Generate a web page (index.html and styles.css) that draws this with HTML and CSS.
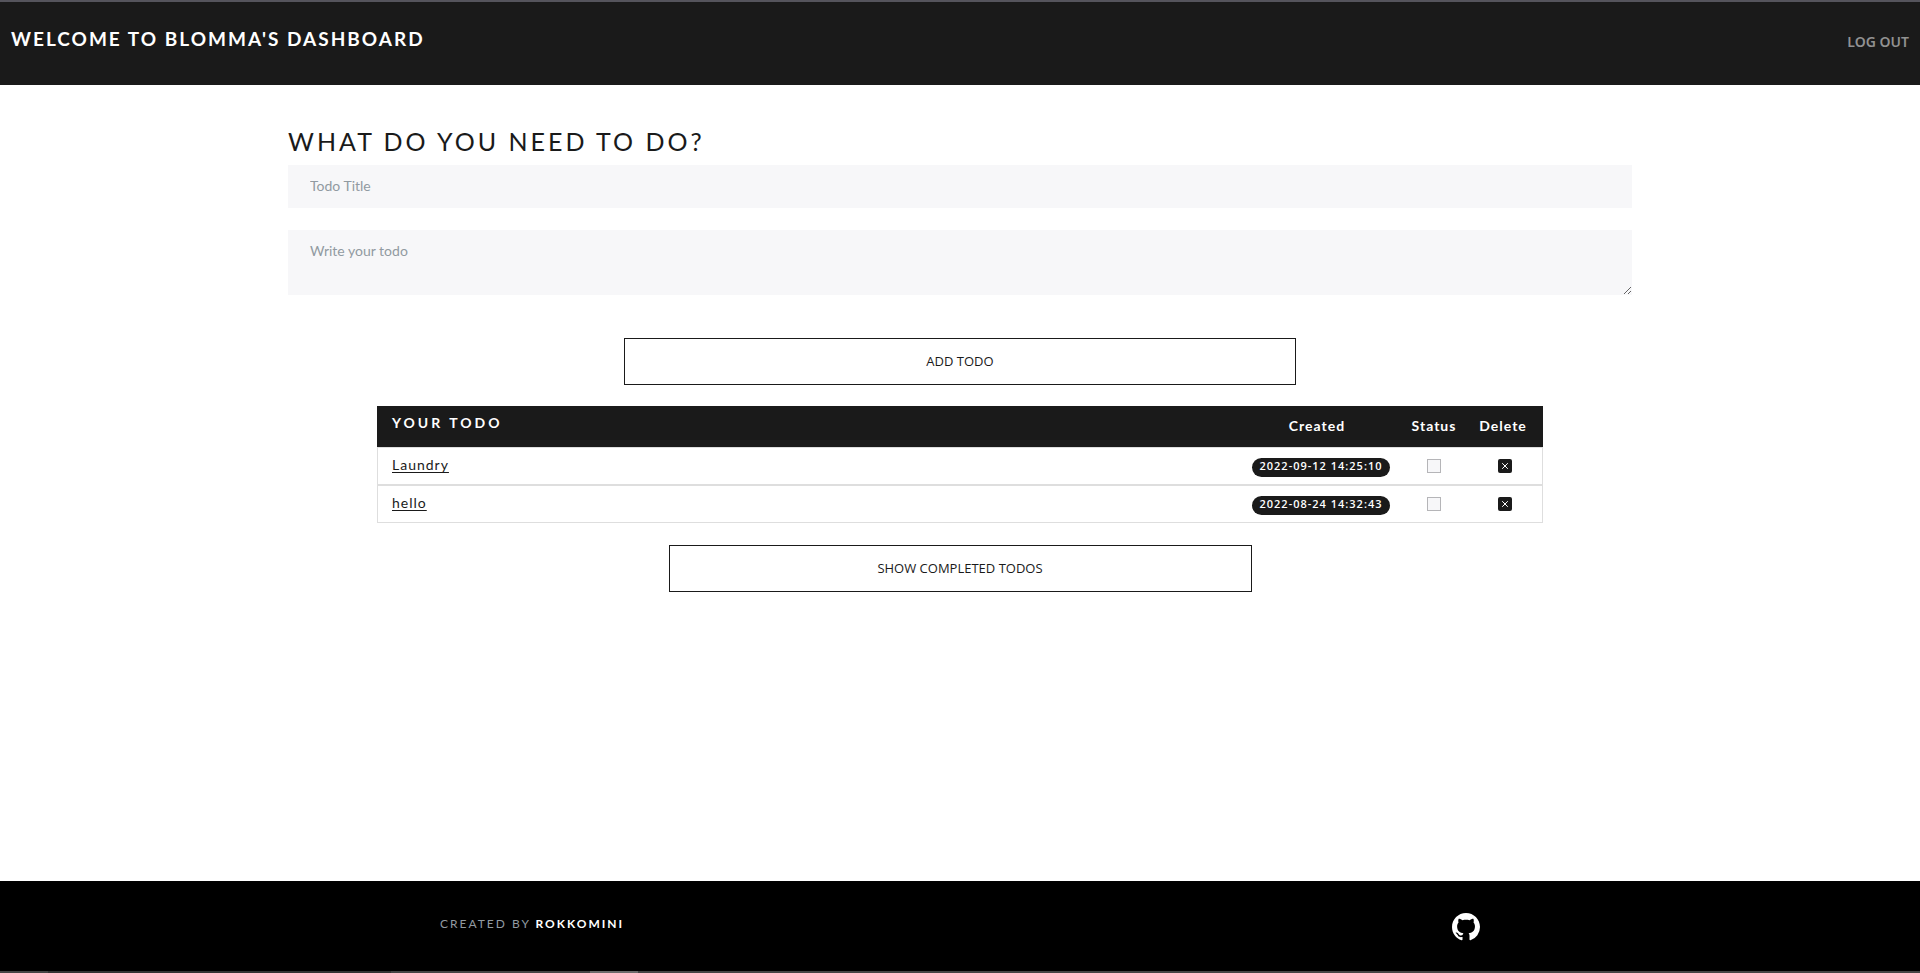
FILE: index.html
```html
<!DOCTYPE html>
<html lang="en">
<head>
<meta charset="utf-8">
<meta name="viewport" content="width=device-width, initial-scale=1">
<title>Dashboard</title>
<link rel="stylesheet" href="styles.css">
</head>
<body>
<header class="topbar">
  <h1 class="topbar-title">Welcome to Blomma's dashboard</h1>
  <a class="logout" href="#">Log out</a>
</header>
<main class="content">
  <form class="todo-form">
    <h2 class="form-title">What do you need to do?</h2>
    <input class="field" type="text" placeholder="Todo Title" aria-label="Todo Title">
    <textarea class="field field-area" placeholder="Write your todo" aria-label="Write your todo"></textarea>
    <button class="outline-button" type="button">Add todo</button>
  </form>
  <section class="todos">
    <table class="todo-table">
      <thead>
        <tr>
          <th class="name-head" scope="col">Your todo</th>
          <th class="created-col" scope="col">Created</th>
          <th class="status-col" scope="col">Status</th>
          <th class="delete-col" scope="col">Delete</th>
        </tr>
      </thead>
      <tbody>
        <tr>
          <td class="name-cell"><a class="todo-link" href="#">Laundry</a></td>
          <td class="created-col"><span class="badge">2022-09-12 14:25:10</span></td>
          <td class="status-col"><input class="check" type="checkbox" aria-label="Laundry completed"></td>
          <td class="delete-col"><button class="delete" type="button" aria-label="Delete Laundry"><svg viewBox="0 0 14 14"><path d="M4.2 4.2l5.6 5.6M9.8 4.2l-5.6 5.6"/></svg></button></td>
        </tr>
        <tr>
          <td class="name-cell"><a class="todo-link" href="#">hello</a></td>
          <td class="created-col"><span class="badge">2022-08-24 14:32:43</span></td>
          <td class="status-col"><input class="check" type="checkbox" aria-label="hello completed"></td>
          <td class="delete-col"><button class="delete" type="button" aria-label="Delete hello"><svg viewBox="0 0 14 14"><path d="M4.2 4.2l5.6 5.6M9.8 4.2l-5.6 5.6"/></svg></button></td>
        </tr>
      </tbody>
    </table>
    <button class="outline-button" type="button">Show completed todos</button>
  </section>
</main>
<footer class="footer">
  <p class="credit">Created by <a class="author" href="#">Rokkomini</a></p>
  <a class="github" href="#" aria-label="GitHub"><svg viewBox="0 0 16 16"><path d="M8 0C3.58 0 0 3.58 0 8c0 3.54 2.29 6.53 5.47 7.59.4.07.55-.17.55-.38 0-.19-.01-.82-.01-1.49-2.01.37-2.53-.49-2.69-.94-.09-.23-.48-.94-.82-1.13-.28-.15-.68-.52-.01-.53.63-.01 1.08.58 1.23.82.72 1.21 1.87.87 2.33.66.07-.52.28-.87.51-1.07-1.78-.2-3.64-.89-3.64-3.95 0-.87.31-1.59.82-2.15-.08-.2-.36-1.02.08-2.12 0 0 .67-.21 2.2.82.64-.18 1.32-.27 2-.27s1.36.09 2 .27c1.53-1.04 2.2-.82 2.2-.82.44 1.1.16 1.92.08 2.12.51.56.82 1.27.82 2.15 0 3.07-1.87 3.75-3.65 3.95.29.25.54.73.54 1.48 0 1.07-.01 1.93-.01 2.2 0 .21.15.46.55.38A8.01 8.01 0 0 0 16 8c0-4.42-3.58-8-8-8z"/></svg></a>
</footer>
<div class="bottom-strip"></div>
</body>
</html>
```
FILE: styles.css
```css
* { box-sizing: border-box; }

body {
  margin: 0;
  min-height: 100vh;
  display: flex;
  flex-direction: column;
  background: #fff;
  color: #1a1a1a;
  font-family: Lato, "Open Sans", sans-serif;
  font-size: 14px;
  line-height: 21px;
}

h1, h2, p { margin: 0; }

.topbar {
  display: flex;
  justify-content: space-between;
  align-items: flex-start;
  padding: 26px 11px 33px;
  border-top: 2px solid #55545c;
  background: #1a1a1a;
}

.topbar-title {
  color: #fff;
  font-size: 19px;
  font-weight: 700;
  line-height: 22px;
  letter-spacing: 2px;
  text-transform: uppercase;
}

.logout {
  margin-top: 4px;
  color: #919191;
  font: 600 14px/20px "Noto Sans", sans-serif;
  text-decoration: none;
  text-transform: uppercase;
}

.content { padding: 40px 15% 32px; }

.todo-form {
  display: flex;
  flex-direction: column;
}

.form-title {
  margin-bottom: 8px;
  font-size: 25px;
  font-weight: 400;
  line-height: 32px;
  letter-spacing: 3px;
  text-transform: uppercase;
}

.field {
  width: 100%;
  height: 43px;
  margin: 0 0 22px;
  padding: 10px 22px 12px;
  border: 0;
  border-radius: 0;
  background: #f7f7f9;
  color: #1a1a1a;
  font: inherit;
}

.field::placeholder { color: #919aa1; opacity: 1; }

.field-area {
  height: 65px;
  margin-bottom: 43px;
  resize: vertical;
}

.outline-button {
  display: block;
  width: 50%;
  height: 47px;
  margin: 0 auto;
  padding: 0 24px 2px;
  border: 1px solid #1a1a1a;
  background: #fff;
  color: #1a1a1a;
  font-family: "Open Sans", sans-serif;
  font-size: 13px;
  line-height: 18px;
  text-transform: uppercase;
}

.todos {
  width: 1166px;
  max-width: 100%;
  margin: 21px auto 0;
}

.todo-table {
  width: 100%;
  margin-bottom: 22px;
  border-collapse: separate;
  border-spacing: 0;
}

.todo-table th {
  height: 41px;
  padding: 0 0 2px;
  background: #1a1a1a;
  color: #fff;
  font-weight: 700;
  letter-spacing: 1px;
}

.todo-table .name-head {
  padding: 0 15px 9px;
  letter-spacing: 3px;
  text-align: left;
  text-transform: uppercase;
}

.todo-table td {
  height: 38px;
  padding: 0;
  border: solid #dedede;
  border-width: 1px 0;
}

.todo-table .name-cell {
  padding: 0 14px 3px;
  border-left-width: 1px;
}

.todo-table td:last-child { border-right-width: 1px; }

.todo-table .created-col { width: 168px; text-align: center; }
.todo-table td.created-col { padding: 0 0 2px 8px; }
.todo-table .status-col { width: 66px; text-align: center; }
.todo-table .delete-col { width: 76px; text-align: center; }
.todo-table th.delete-col { padding-right: 4px; }

.todo-link {
  color: #1a1a1a;
  letter-spacing: 1px;
  text-underline-offset: 2px;
}

.badge {
  display: inline-block;
  padding: 0 7px 3px;
  border-radius: 10px;
  background: #1a1a1a;
  color: #fff;
  font-family: "Open Sans", sans-serif;
  font-size: 11px;
  font-weight: 600;
  line-height: 16px;
  letter-spacing: 1px;
  white-space: nowrap;
}

.check {
  display: block;
  width: 14px;
  height: 14px;
  margin: 0 auto;
  border: 1px solid #b5b5b8;
  background: #f7f7f9;
  appearance: none;
}

.check:checked { background: #1a1a1a; }

.delete {
  display: block;
  width: 14px;
  height: 14px;
  margin: 0 auto;
  padding: 0;
  border: 0;
  border-radius: 2px;
  background: #1a1a1a;
}

.delete svg {
  display: block;
  fill: none;
  stroke: #fff;
  stroke-width: 1;
}

.footer {
  display: flex;
  justify-content: space-around;
  align-items: center;
  height: 90px;
  margin-top: auto;
  padding: 2px 26px 0;
  background: #000;
}

.credit {
  padding-bottom: 8px;
  color: #919aa1;
  font-size: 12px;
  letter-spacing: 2px;
  text-transform: uppercase;
}

.author {
  color: #fff;
  font-weight: 700;
  text-decoration: none;
}

.github svg {
  display: block;
  width: 28px;
  height: 28px;
  fill: #fff;
}

.bottom-strip {
  height: 2px;
  background: linear-gradient(90deg, #444 48px, #333 48px 391px, #444 391px 590px, #6b6b6b 590px 638px, #444 638px);
}
```
